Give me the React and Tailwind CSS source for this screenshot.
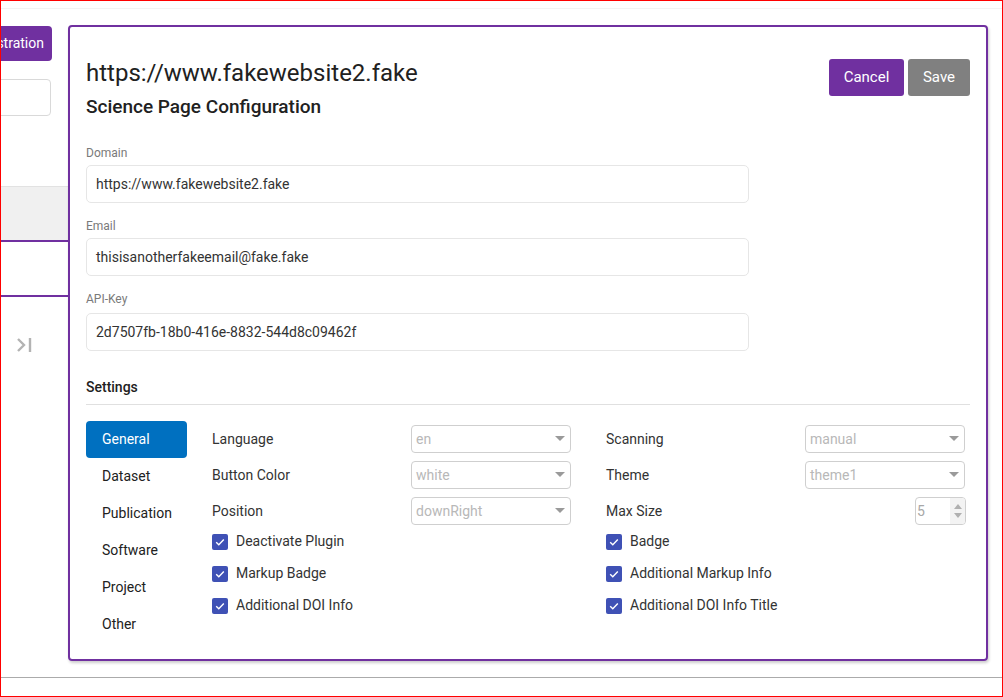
function Caret() {
  return (
    <svg width="10" height="6" viewBox="0 0 10 6" className="shrink-0">
      <path d="M0 0h10L5 5z" fill="#9a9a9a" />
    </svg>
  );
}

function SelectRow({ label, value }) {
  return (
    <div className="flex items-center h-[28px] mb-[8px]">
      <span className="w-[199px] text-[14px] text-[#333]">{label}</span>
      <div className="w-[160px] h-[28px] border border-[#cfcfcf] rounded-[4px] pl-[4px] pr-[5px] flex items-center justify-between text-[14px] text-[#b8b8b8]">
        <span>{value}</span>
        <Caret />
      </div>
    </div>
  );
}

function CheckRow({ label }) {
  return (
    <div className="flex items-center h-[32px] pt-[1px]">
      <div className="w-[16px] h-[16px] rounded-[2px] bg-[#3f51b5] flex items-center justify-center">
        <svg width="12" height="12" viewBox="0 0 12 12">
          <path d="M2.2 6.2l2.6 2.6 5-5.4" fill="none" stroke="#fff" strokeWidth="1.4" />
        </svg>
      </div>
      <span className="ml-[8px] text-[14px] text-[#333]">{label}</span>
    </div>
  );
}

function Field({ label, value, first, gap = 'mt-[4px]' }) {
  return (
    <div className={first ? '' : 'mt-[15px]'}>
      <div className="text-[12px] leading-[16px] text-[#7a7a7a]">{label}</div>
      <div className={`${gap} w-3/4 h-[38px] border border-[#e6e6e6] rounded-[5px] px-[9px] flex items-center text-[14px] text-[#333]`}>
        {value}
      </div>
    </div>
  );
}

const tabs = ['General', 'Dataset', 'Publication', 'Software', 'Project', 'Other'];

export default function App() {
  return (
    <div className="w-[1003px] h-[697px] border border-[#ff0000] bg-white overflow-hidden flex flex-col font-['Roboto',sans-serif] text-[#212121]">
      <div className="mt-[7px] h-px bg-[#f3f3f3]" />

      <div className="flex h-[668px] pt-[16px]">
        {/* Left sidebar (cut off) */}
        <div className="w-[67px] shrink-0 overflow-hidden">
          <div className="w-[200px] -ml-[133px] flex flex-col">
            <div className="mt-[1px] mr-[16px] h-[35px] rounded-[4px] bg-[#7030a0] text-white text-[14px] flex items-center justify-end pr-[8px]">
              Registration
            </div>
            <div className="mt-[18px] mr-[17px] h-[37px] rounded-[4px] border border-[#d9d9d9]" />
            <div className="mt-[70px] h-[56px] bg-[#f0f0f0] border-t border-[#e2e2e2] border-b-2 border-b-[#7030a0]" />
            <div className="h-[55px] border-b-2 border-[#7030a0]" />
            <div className="mt-[40px] pl-[148px]">
              <svg width="18" height="16" viewBox="0 0 18 16">
                <path d="M2 2l6 6-6 6" fill="none" stroke="#b3b3b3" strokeWidth="2.4" />
                <path d="M14 1v14" stroke="#b3b3b3" strokeWidth="2.4" />
              </svg>
            </div>
          </div>
        </div>

        {/* Card */}
        <div className="w-[920px] h-[636px] border-2 border-[#7030a0] rounded-[4px] shadow-[1px_2px_3px_rgba(0,0,0,0.2)] px-[16px] pt-[30px]">
          <div className="flex justify-between items-start">
            <div>
              <h1 className="text-[24px] leading-[32px] text-[#212121]">https://www.fakewebsite2.fake</h1>
              <h2 className="mt-[4px] text-[19px] leading-[28px] font-medium text-[#212121]">Science Page Configuration</h2>
            </div>
            <div className="flex gap-[4px] mt-[2px]">
              <button className="w-[75px] h-[37px] rounded-[3px] bg-[#7030a0] text-white text-[15px]">Cancel</button>
              <button className="w-[62px] h-[37px] rounded-[3px] bg-[#808080] text-white text-[15px]">Save</button>
            </div>
          </div>

          <div className="mt-[24px]">
            <Field first label="Domain" value="https://www.fakewebsite2.fake" />
            <Field label="Email" value="thisisanotherfakeemail@fake.fake" />
            <Field label="API-Key" value="2d7507fb-18b0-416e-8832-544d8c09462f" gap="mt-[6px]" />
          </div>

          <div className="mt-[26px] text-[14px] leading-[20px] font-medium text-[#212121]">Settings</div>
          <div className="mt-[7px] h-px bg-[#e0e0e0]" />

          <div className="mt-[16px] flex">
            <div className="w-[101px] flex flex-col">
              {tabs.map((t, i) => (
                <div
                  key={t}
                  className={
                    i === 0
                      ? 'h-[37px] rounded-[4px] bg-[#0070c0] text-white text-[14px] pl-[16px] flex items-center'
                      : 'h-[37px] text-[#212121] text-[14px] pl-[16px] flex items-center'
                  }
                >
                  {t}
                </div>
              ))}
            </div>

            <div className="ml-[25px] mt-[4px] grid grid-cols-[359px_360px] gap-x-[35px]">
              <div className="flex flex-col">
                <SelectRow label="Language" value="en" />
                <SelectRow label="Button Color" value="white" />
                <SelectRow label="Position" value="downRight" />
                <div className="-mt-[8px]">
                  <CheckRow label="Deactivate Plugin" />
                  <CheckRow label="Markup Badge" />
                  <CheckRow label="Additional DOI Info" />
                </div>
              </div>
              <div className="flex flex-col">
                <SelectRow label="Scanning" value="manual" />
                <SelectRow label="Theme" value="theme1" />
                <div className="flex items-center h-[28px] mb-[8px]">
                  <span className="flex-1 text-[14px] text-[#333]">Max Size</span>
                  <div className="w-[51px] h-[28px] border border-[#cfcfcf] rounded-[4px] flex overflow-hidden">
                    <span className="flex-1 pl-[1px] text-[14px] text-[#a8a8a8] flex items-center">5</span>
                    <div className="w-[15px] bg-[#f3f3f3] flex flex-col items-center justify-center gap-[4px]">
                      <svg width="8" height="5" viewBox="0 0 8 5"><path d="M0 5h8L4 0z" fill="#b0b0b0" /></svg>
                      <svg width="8" height="5" viewBox="0 0 8 5"><path d="M0 0h8L4 5z" fill="#b0b0b0" /></svg>
                    </div>
                  </div>
                </div>
                <div className="-mt-[8px]">
                  <CheckRow label="Badge" />
                  <CheckRow label="Additional Markup Info" />
                  <CheckRow label="Additional DOI Info Title" />
                </div>
              </div>
            </div>
          </div>
        </div>
      </div>

      <div className="h-px bg-[#ababab]" />
    </div>
  );
}
